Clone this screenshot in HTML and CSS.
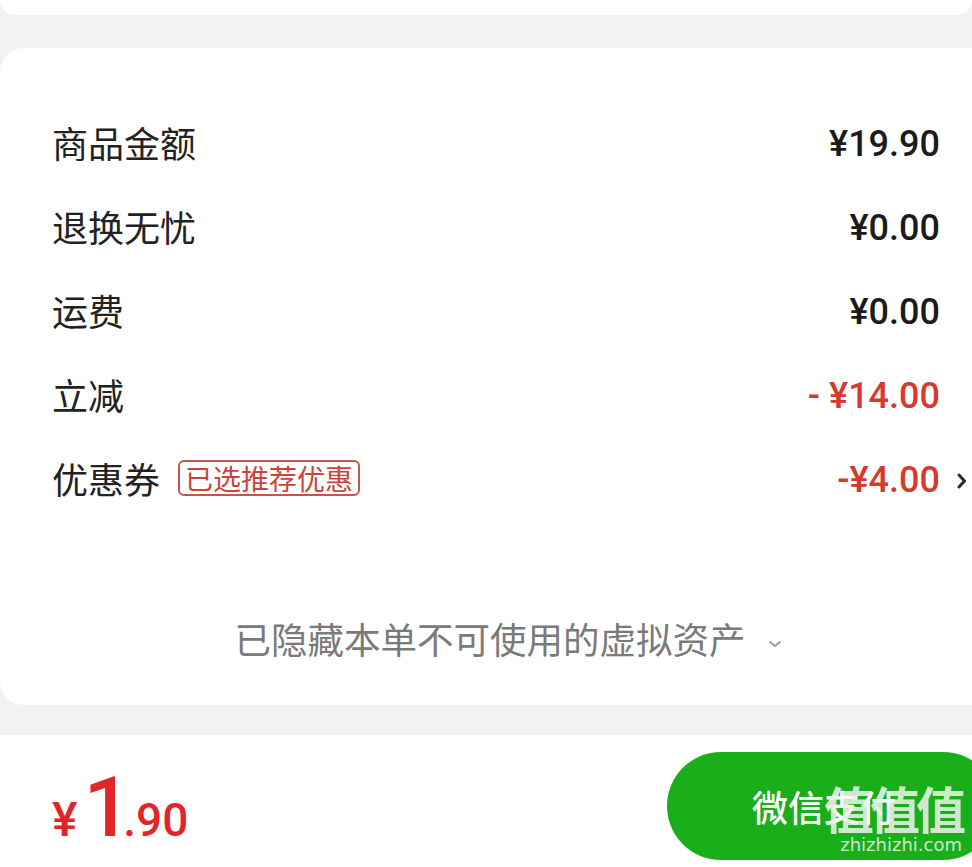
FILE: index.html
```html
<!DOCTYPE html>
<html>
<head>
    <title>订单结算</title>
    <meta name="viewport" content="width=device-width, initial-scale=1.0">
    <link rel="stylesheet" href="styles.css">
</head>
<body>
    <div class="top-card"></div>

    <div class="summary-card">
        <div class="row">
            <span class="label">商品金额</span>
            <span class="value">¥19.90</span>
        </div>
        <div class="row">
            <span class="label">退换无忧</span>
            <span class="value">¥0.00</span>
        </div>
        <div class="row">
            <span class="label">运费</span>
            <span class="value">¥0.00</span>
        </div>
        <div class="row">
            <span class="label">立减</span>
            <span class="value red">-&nbsp;¥14.00</span>
        </div>
        <div class="row">
            <span class="label">优惠券 <span class="tag">已选推荐优惠</span></span>
            <span class="value red">-¥4.00<svg class="arrow" width="10" height="18" viewBox="0 0 10 18"><path d="M2 3 L7.5 9 L2 15" fill="none" stroke="#2a2a2a" stroke-width="3" stroke-linecap="round" stroke-linejoin="round"/></svg></span>
        </div>

        <div class="hidden-assets">
            已隐藏本单不可使用的虚拟资产<svg class="chev" width="14" height="10" viewBox="0 0 14 10">
                <path d="M2 3 L7 7 L12 3" fill="none" stroke="#999" stroke-width="1.8" stroke-linecap="round" stroke-linejoin="round"/>
            </svg>
        </div>
    </div>

    <div class="pay-bar">
        <div class="total">
            <span class="yen">¥</span><span class="big">1</span><span class="small">.90</span>
        </div>
        <button class="pay-btn">微信支付</button>
        <div class="watermark">
            <span class="wm-big">值值值</span>
            <span class="wm-small">zhizhizhi.com</span>
        </div>
    </div>
</body>
</html>
```

FILE: styles.css
```css
/* General */
body {
    margin: 0;
    background: #f2f2f2;
    font-family: "Noto Sans CJK SC", "Liberation Sans", sans-serif;
    width: 972px;
    height: 867px;
    overflow: hidden;
}

/* Cards */
.top-card {
    height: 15px;
    background: #fff;
    border-radius: 0 0 16px 16px;
    margin-bottom: 33px;
}
.summary-card {
    height: 657px;
    box-sizing: border-box;
    background: #fff;
    border-radius: 24px 0 0 24px;
    padding: 54px 0 0 52px;
    margin-bottom: 30px;
}

/* Rows */
.row {
    height: 84px;
    display: flex;
    align-items: center;
    justify-content: space-between;
    padding-right: 32px;
}
.label {
    font-size: 36px;
    color: #222;
    display: flex;
    align-items: center;
    margin-top: -5px;
}
.value {
    font-family: "Roboto", "Liberation Sans", sans-serif;
    font-size: 36px;
    font-weight: 500;
    color: #1b1b1b;
    position: relative;
}
.red {
    color: #d63a2c;
}
.arrow {
    position: absolute;
    left: 100%;
    margin-left: 17px;
    top: 13px;
}
.tag {
    margin-left: 18px;
    font-size: 28px;
    color: #c9453b;
    border: 2px solid #c9544b;
    border-radius: 6px;
    padding: 0 5px;
    line-height: 32px;
}

/* Hidden assets line */
.hidden-assets {
    margin-top: 92px;
    margin-left: -52px;
    padding-left: 44px;
    text-align: center;
    font-size: 36.5px;
    color: #7a7a7a;
    line-height: 50px;
}
.chev {
    margin-left: 22px;
    vertical-align: middle;
}

/* Bottom bar */
.pay-bar {
    height: 132px;
    background: #fff;
    display: flex;
    align-items: center;
    justify-content: space-between;
    padding-left: 52px;
    position: relative;
}
.total {
    color: #e1262b;
    font-family: "Roboto", "Liberation Sans", sans-serif;
    font-weight: 500;
    margin-top: 12px;
}
.yen {
    font-size: 48px;
}
.big {
    font-size: 84px;
    margin-left: 6px;
    letter-spacing: -8px;
}
.small {
    font-size: 46px;
}
.pay-btn {
    width: 330px;
    height: 108px;
    margin-top: 10px;
    margin-right: -25px;
    border: none;
    border-radius: 54px;
    background: #19ae1a;
    color: #fff;
    font-family: "Noto Sans CJK SC", sans-serif;
    font-size: 36px;
    font-weight: 500;
    text-align: left;
    padding-left: 85px;
}

/* watermark overlay */
.watermark {
    position: absolute;
    left: 822px;
    top: 46px;
    width: 140px;
    display: flex;
    flex-direction: column;
    align-items: flex-end;
    color: rgba(232, 240, 232, 0.88);
}
.wm-big {
    font-size: 50px;
    font-weight: 700;
    line-height: 52px;
    letter-spacing: -4px;
}
.wm-small {
    font-family: "DejaVu Sans", sans-serif;
    font-size: 18px;
    line-height: 24px;
}
```
